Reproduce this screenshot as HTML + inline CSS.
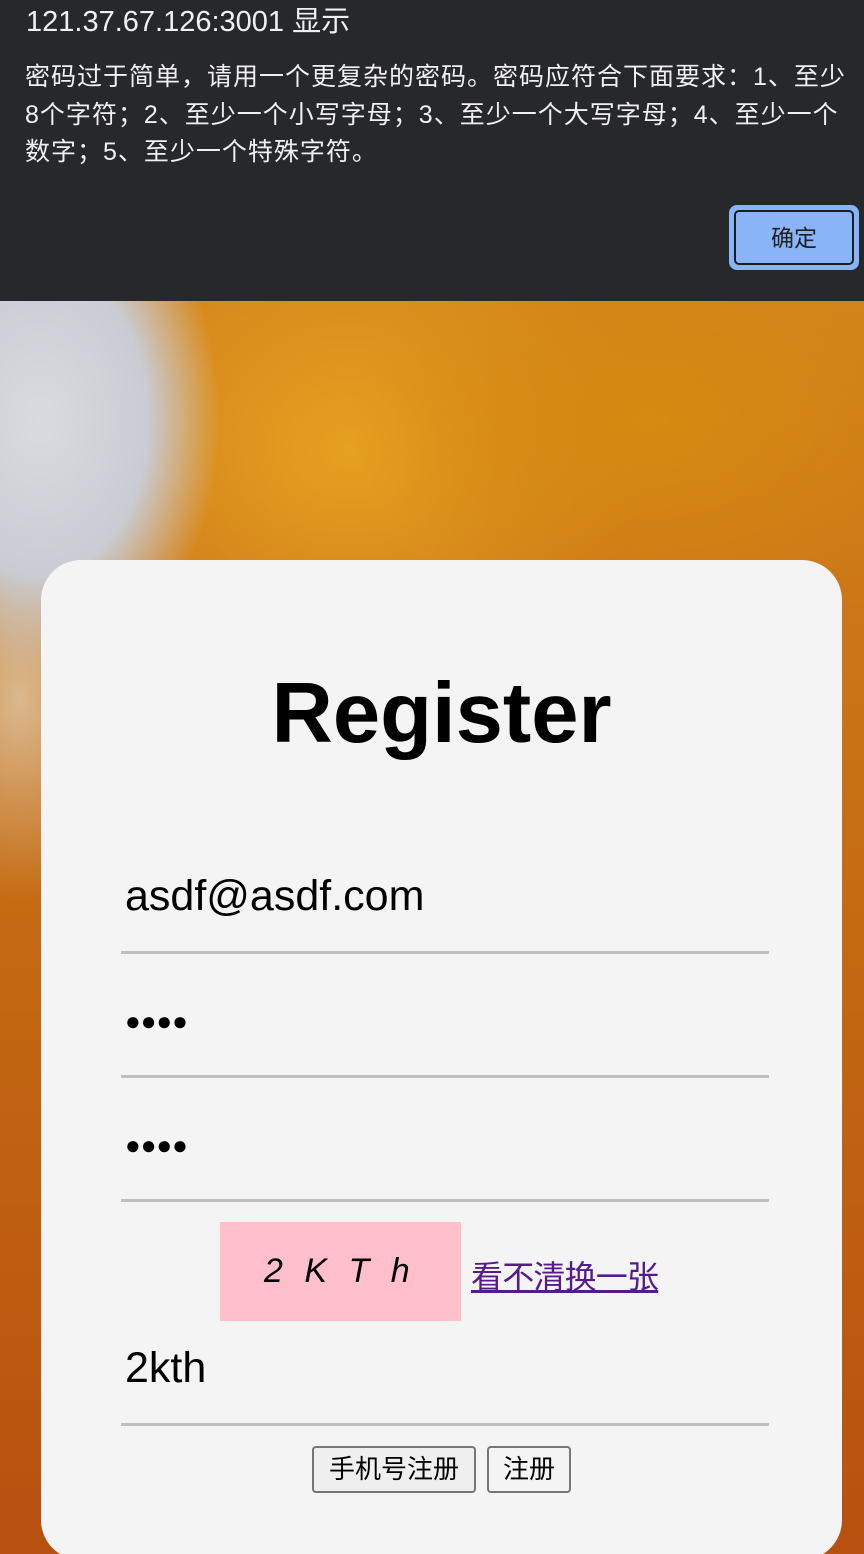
<!DOCTYPE html>
<html><head><meta charset="utf-8"><style>
*{margin:0;padding:0;box-sizing:border-box}
html{background:#c46a12;width:864px;height:1554px;overflow:hidden}
body{width:864px;height:1554px;overflow:hidden;position:relative;font-family:"Liberation Sans","Noto Sans CJK SC",sans-serif;
background:
radial-gradient(ellipse 180px 260px at 40px 420px,#d8dbe0 0%,#c9ccd2 60%,rgba(200,200,205,0) 100%),
radial-gradient(ellipse 120px 200px at 20px 700px,rgba(230,230,225,.6),rgba(0,0,0,0)),
radial-gradient(ellipse 300px 200px at 650px 420px,#d68a10,rgba(214,138,16,0)),
radial-gradient(ellipse 300px 250px at 350px 450px,#e6a020,rgba(230,160,32,0)),
linear-gradient(180deg,#d99020 0%,#c46a12 60%,#b85010 100%);}
.dlg{position:absolute;left:0;top:0;width:864px;height:301px;background:#27282c;color:#f0f0f0}
.dlg .t{position:absolute;left:26px;top:4px;font-size:29px;line-height:36px}
.dlg .m{position:absolute;left:25px;top:59px;width:830px;font-size:25px;line-height:37.5px;letter-spacing:1px}
.ok{position:absolute;left:729px;top:205px;width:130px;height:65px;border-radius:8px;background:#8ab4f8;border:3px solid #8ab4f8}
.ok div{position:absolute;inset:2px;border:2px solid #1c1c1e;border-radius:5px;color:#202124;font-size:23px;text-align:center;line-height:53px}
.card{position:absolute;left:41px;top:560px;width:801px;height:1000px;background:#f4f4f4;border-radius:40px}
h1{position:absolute;top:664px;text-align:center;font-size:85px;font-weight:bold;line-height:100px}
.in{position:absolute;left:121px;width:648px;border-bottom:3px solid #bfbfbf;font-size:43px;padding-left:4px}
.cap{position:absolute;left:220px;top:1222px;width:241px;height:99px;background:#ffc0cb;font-style:italic;font-size:34px;line-height:99px;padding-left:44px;word-spacing:12px}
a{position:absolute;left:471px;top:1252px;color:#551a8b;font-size:32px;text-decoration:underline;letter-spacing:-0.8px}
.b{position:absolute;top:1446px;height:47px;border:2px solid #767676;border-radius:4px;background:#efefef;font-size:26px;text-align:center;line-height:43px}
.dots{font-size:26px;letter-spacing:0px;line-height:50px}
</style></head><body>
<div class="dlg"><div class="t">121.37.67.126:3001 显示</div>
<div class="m">密码过于简单，请用一个更复杂的密码。密码应符合下面要求：1、至少8个字符；2、至少一个小写字母；3、至少一个大写字母；4、至少一个数字；5、至少一个特殊字符。</div>
<div class="ok"><div>确定</div></div></div>
<div class="card"></div>
<h1 style="left:41px;width:801px;">Register</h1>
<div class="in" style="top:872px;height:82px;">asdf@asdf.com</div>
<div class="in dots" style="top:996px;height:82px;">●●●●</div>
<div class="in dots" style="top:1120px;height:82px;">●●●●</div>
<div class="cap">2 K T h</div>
<a>看不清换一张</a>
<div class="in" style="top:1344px;height:82px;">2kth</div>
<div class="b" style="left:312px;width:164px">手机号注册</div>
<div class="b" style="left:487px;width:84px;background:#f4f4f4">注册</div>
</body></html>
